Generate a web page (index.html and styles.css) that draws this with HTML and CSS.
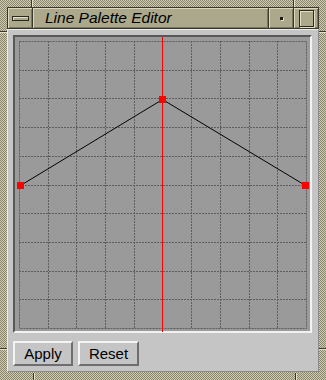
FILE: index.html
```html
<!DOCTYPE html>
<html lang="en">
  <head>
    <meta charset="UTF-8" />
    <title>Line Palette Editor</title>
    <link rel="stylesheet" href="styles.css">
  </head>
  <body>
    <div class="window">
      <!-- Title bar -->
      <div class="titlebar">
        <div class="tb-btn menu-btn"><span class="menu-bar"></span></div>
        <div class="title">Line Palette Editor</div>
        <div class="tb-btn min-btn"><span class="min-dot"></span></div>
        <div class="tb-btn max-btn"><span class="max-box"></span></div>
      </div>

      <!-- Editor area -->
      <div class="content">
        <div class="canvas">
          <svg class="grid" width="288" height="288" viewBox="0 0 288 288">
            <g class="grid-lines">
              <path d="M0.5 0.5H287.5V287.5H0.5Z" />
              <path d="M29.5 0V288M57.5 0V288M86.5 0V288M115.5 0V288M172.5 0V288M201.5 0V288M230.5 0V288M258.5 0V288" />
              <path d="M0 29.5H288M0 57.5H288M0 86.5H288M0 115.5H288M0 144.5H288M0 172.5H288M0 201.5H288M0 230.5H288M0 258.5H288" />
            </g>
            <path class="center-line" d="M143.5 -4V291" />
            <path class="curve" d="M1.5 144.5L143.5 58.5L286.5 144.5" />
            <rect class="pt" x="-2" y="141" width="7" height="7" />
            <rect class="pt" x="140" y="55" width="7" height="7" />
            <rect class="pt" x="283" y="141" width="7" height="7" />
          </svg>
        </div>
        <div class="buttons">
          <button class="btn btn-apply">Apply</button>
          <button class="btn btn-reset">Reset</button>
        </div>
      </div>

      <!-- resize corner marks on the frame -->
      <span class="notch notch-v" style="left: 31px; top: 0"></span>
      <span class="notch notch-v" style="left: 293px; top: 0"></span>
      <span class="notch notch-v" style="left: 33px; bottom: 0"></span>
      <span class="notch notch-v" style="left: 295px; bottom: 0"></span>
      <span class="notch notch-h" style="top: 31px; left: 0"></span>
      <span class="notch notch-h" style="top: 31px; right: 0"></span>
      <span class="notch notch-h" style="top: 348px; left: 0"></span>
      <span class="notch notch-h" style="top: 348px; right: 0"></span>
    </div>
  </body>
</html>
```

FILE: styles.css
```css
body {
  margin: 0;
  background: #c5c5c5;
}
.window {
  position: relative;
  width: 326px;
  height: 380px;
  box-sizing: border-box;
  padding: 7px 7px 8px 7px;
  display: flex;
  flex-direction: column;
  background: repeating-conic-gradient(#cfcbb2 0 25%, #8a866e 0 50%) 0 0 / 2px 2px;
}
.titlebar {
  display: flex;
  height: 24px;
  box-sizing: border-box;
  border: 1px solid #3a382b;
  background: #aca88c;
}
.tb-btn {
  display: flex;
  align-items: center;
  justify-content: center;
  box-sizing: border-box;
  width: 25px;
  box-shadow: inset 1px 1px #dcd8c0, inset -1px -1px #7a7660;
}
.menu-btn {
  width: 25px;
  border-right: 1px solid #3a382b;
}
.min-btn {
  width: 26px;
  border-left: 1px solid #3a382b;
  border-right: 1px solid #3a382b;
}
.max-btn {
  width: 24px;
}
.menu-bar {
  width: 17px;
  height: 5px;
  box-sizing: border-box;
  border: 1px solid #2a2820;
  background: #aca88c;
  box-shadow: inset 1px 1px #e4e0c8;
}
.min-dot {
  width: 3px;
  height: 3px;
  background: #1e1c16;
  box-shadow: 1px 1px #e4e0c8;
}
.max-box {
  width: 15px;
  height: 17px;
  box-sizing: border-box;
  border: 1px solid #2a2820;
  background: #aca88c;
  box-shadow: inset 1px 1px #e4e0c8, 1px 1px #e4e0c8;
}
.title {
  flex: 1;
  display: flex;
  align-items: center;
  padding-left: 12px;
  font-family: "Liberation Sans", Arial, sans-serif;
  font-style: italic;
  font-size: 15.5px;
  color: #000;
  box-shadow: inset 1px 1px #dcd8c0, inset -1px -1px #7a7660;
}
.content {
  flex: 1;
  display: flex;
  flex-direction: column;
  padding: 5px;
  background: #c5c5c5;
  border: 1px solid;
  border-color: #ececec #8a8a8a #8a8a8a #ececec;
}
.canvas {
  width: 299px;
  height: 298px;
  box-sizing: border-box;
  padding: 4px;
  border: 2px solid;
  border-color: #585858 #f2f2f2 #f2f2f2 #585858;
  background: #9a9a9a;
}
.grid {
  display: block;
  overflow: visible;
}
.grid-lines path {
  fill: none;
  stroke: #5e5e5e;
  stroke-width: 1;
  stroke-dasharray: 2 1;
}
.center-line {
  stroke: #ff0000;
  stroke-width: 1;
}
.curve {
  fill: none;
  stroke: #000;
  stroke-width: 1;
}
.pt {
  fill: #ff0000;
}
.buttons {
  display: flex;
  gap: 5px;
  margin-top: 8px;
}
.btn {
  width: 60px;
  height: 25px;
  padding: 0;
  background: #c5c5c5;
  border: 2px solid;
  border-color: #f4f4f4 #6e6e6e #6e6e6e #f4f4f4;
  font-family: "Liberation Sans", Arial, sans-serif;
  font-size: 15px;
  color: #000;
}
.btn-reset {
  width: 61px;
}
.notch {
  position: absolute;
}
.notch-v {
  width: 1px;
  height: 7px;
  background: #3a382b;
  box-shadow: 1px 0 #e4e0c8;
}
.notch-h {
  width: 7px;
  height: 1px;
  background: #3a382b;
  box-shadow: 0 1px #e4e0c8;
}
```
